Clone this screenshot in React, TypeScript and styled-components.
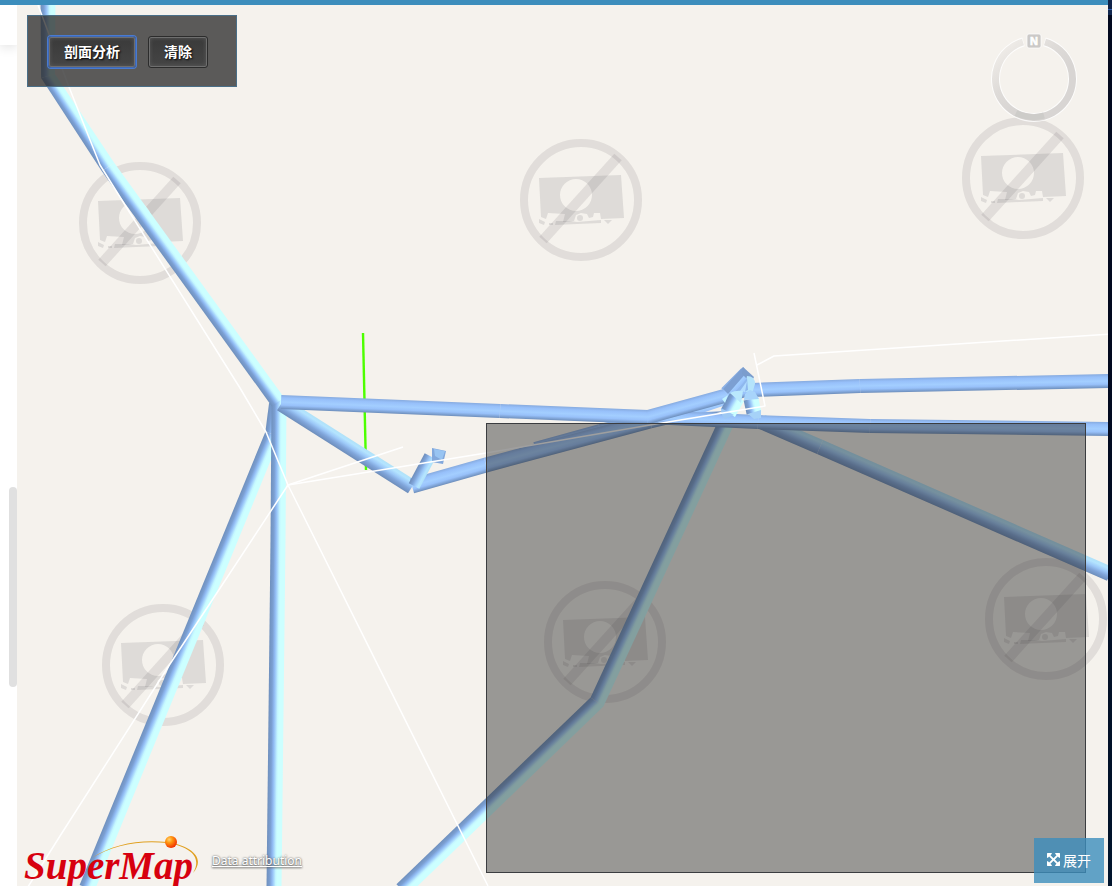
import React, { useId } from "react";
import styled, { createGlobalStyle } from "styled-components";

const sans = `"Noto Sans CJK SC", "Liberation Sans", sans-serif`;

const GlobalStyle = createGlobalStyle`
  *, *::before, *::after { box-sizing: border-box; }
  body { margin: 0; background: #ffffff; font-family: ${sans}; overflow: hidden; }
`;

/* ---------- page frame ---------- */

const Page = styled.div`
  display: grid;
  grid-template-columns: minmax(0, 1fr) 4px;
  height: 100vh;
`;

const Workspace = styled.div`
  display: grid;
  grid-template-columns: 17px minmax(0, 1fr);
  grid-template-rows: minmax(0, 1fr);
  border-top: 5px solid #3c8dbc;
`;

const EdgeStrip = styled.aside`
  background: linear-gradient(#0f2248 0 9px, #2d5bab 9px 10px, #12284f 10px 15px, #02091f 15px 40%, #01142c);
`;

const SideColumn = styled.aside`
  display: flex;
  flex-direction: column;
  background: #ffffff;
`;

const SideHeader = styled.div`
  height: 40px;
  box-shadow: 0 2px 12px rgba(0, 0, 0, 0.12);
  clip-path: inset(0 0 -20px 0);
`;

const ScrollTrack = styled.div`
  flex: 1;
  display: flex;
  flex-direction: column;
  align-items: flex-end;

  &::before { content: ""; flex: 442; }
  &::after { content: ""; flex: 199; }
`;

const ScrollThumb = styled.div`
  width: 8px;
  height: 200px;
  border-radius: 4px;
  background: #e0e0e0;
`;

const MapView = styled.main`
  position: relative;
  overflow: hidden;
  background: #f5f2ed;
`;

const SceneSvg = styled.svg`
  display: block;
  width: 100%;
  height: 100%;
`;

/* ---------- floating controls ---------- */

const Toolbar = styled.div`
  position: absolute;
  top: 10px;
  left: 10px;
  display: flex;
  gap: 12px;
  padding: 20px 28px 18px 20px;
  border: 1px solid #4a6f88;
  background: rgba(42, 42, 42, 0.76);
`;

const ToolButton = styled.button<{ $active?: boolean }>`
  height: 32px;
  padding: 0 15px 2px;
  border: 1px solid #2c2c2c;
  border-radius: 3px;
  background: linear-gradient(#3a3a3a, #454545);
  box-shadow: inset 0 0 0 1px #6e6e6e, inset 0 0 4px 1px #5a5a5a
    ${({ $active }) => ($active ? ", 0 0 0 1px #4a7bd0" : "")};
  ${({ $active }) => ($active ? "border-color: #3f68b4;" : "")}
  color: #ffffff;
  font: bold 14px/20px ${sans};
  text-shadow: 1px 1px 2px #000000;
  white-space: nowrap;
  outline: none;
  cursor: pointer;
`;

const CompassSvg = styled.svg`
  position: absolute;
  top: 26px;
  right: 30px;
  width: 88px;
  height: 94px;
`;

const ProfilePanel = styled.section`
  position: absolute;
  right: 22px;
  bottom: 13px;
  width: 600px;
  height: 450px;
  border: 1px solid #3b3d40;
  background: rgba(42, 42, 42, 0.45);
`;

const ExpandButton = styled.button`
  position: absolute;
  right: 4px;
  bottom: 3px;
  display: flex;
  align-items: center;
  justify-content: center;
  gap: 3px;
  width: 70px;
  height: 45px;
  padding: 0 0 2px;
  border: 0;
  background: rgba(60, 141, 188, 0.8);
  color: #ffffff;
  font: 14px/20px ${sans};
  cursor: pointer;
`;

const ExpandIcon = styled.svg`
  width: 13px;
  height: 13px;
  fill: currentColor;
`;

const Credits = styled.footer`
  position: absolute;
  left: 6px;
  bottom: 0;
  display: flex;
  align-items: flex-end;
  gap: 9px;
`;

const LogoSvg = styled.svg`
  display: block;
  width: 180px;
  height: 52px;
`;

const AttributionLink = styled.a`
  margin-bottom: 16px;
  color: #ffffff;
  font: 12px/18px "Noto Sans", "Open Sans", sans-serif;
  text-decoration: underline;
  text-shadow: 0 0 2px #555555, 0 1px 2px #777777;
  white-space: nowrap;
`;

/* ---------- scene ---------- */

type Point = [number, number];
type Shade = "side" | "flat" | "soft";

const shades: Record<Shade, [number, string][]> = {
  side: [
    [0, "#6f90bd"], [0.22, "#7b9fd2"], [0.36, "#8fb9f2"], [0.48, "#a8d6fc"],
    [0.6, "#c4f6ff"], [0.7, "#ccffff"], [1, "#ccffff"],
  ],
  flat: [
    [0, "#87abdf"], [0.2, "#97c0fa"], [0.5, "#a3ceff"], [0.72, "#98c1fa"], [1, "#6d8ebb"],
  ],
  soft: [
    [0, "#6d8dba"], [0.3, "#80a5da"], [0.55, "#9cc8f8"], [0.8, "#b4e4ff"], [1, "#b0e2f8"],
  ],
};

interface PipeProps {
  points: Point[];
  width: number;
  shade?: Shade;
}

/* A run of cylinder segments, each shaded across its own width. */
function Pipe({ points, width, shade = "side" }: PipeProps) {
  const id = useId();
  const segments = points.slice(1).map((end, i) => {
    const [x1, y1] = points[i];
    const [x2, y2] = end;
    const length = Math.hypot(x2 - x1, y2 - y1);
    let nx = -(y2 - y1) / length;
    let ny = (x2 - x1) / length;
    const flip = shade === "flat" ? ny < 0 : nx < 0;
    if (flip) { nx = -nx; ny = -ny; }
    const h = width / 2;
    return { x1, y1, x2, y2, ox: nx * h, oy: ny * h };
  });
  return (
    <g>
      {segments.map((s, i) => (
        <linearGradient
          key={i} id={`${id}${i}`} gradientUnits="userSpaceOnUse"
          x1={s.x1 - s.ox} y1={s.y1 - s.oy} x2={s.x1 + s.ox} y2={s.y1 + s.oy}
        >
          {shades[shade].map(([at, color]) => <stop key={at} offset={at} stopColor={color} />)}
        </linearGradient>
      ))}
      {segments.map((s, i) => {
        const next = segments[i + 1] ?? s;
        const prev = segments[i - 1] ?? s;
        const ax = (s.ox + prev.ox) / 2, ay = (s.oy + prev.oy) / 2;
        const bx = (s.ox + next.ox) / 2, by = (s.oy + next.oy) / 2;
        return (
          <polygon
            key={i} fill={`url(#${id}${i})`}
            points={`${s.x1 - ax},${s.y1 - ay} ${s.x2 - bx},${s.y2 - by} ${s.x2 + bx},${s.y2 + by} ${s.x1 + ax},${s.y1 + ay}`}
          />
        );
      })}
    </g>
  );
}

const missingTiles: Point[] = [
  [140, 223], [581, 200], [1023, 178], [163, 665], [605, 642], [1046, 619],
];

function MissingTile({ at }: { at: Point }) {
  return (
    <g transform={`translate(${at[0]} ${at[1]})`} fill="#3c3a40" fillOpacity="0.12" stroke="#3c3a40" strokeOpacity="0">
      <circle r="57" fill="none" strokeWidth="8" strokeOpacity="0.11" />
      <path
        fillRule="evenodd"
        d="M-42-22 L40-25 L43 18 L20 19 L19 13 L13 13 L12 17 L8 18 L6 14 L0 13 L-5 15 L-7 21 L-18 22 L-16 14 L-33 13 L-35 19 L-40 17Z
           M11-5 A16 16 0 1 0-21-5 A16 16 0 1 0 11-5Z"
      />
      <circle cx="-1" cy="18" r="3" />
      <path d="M-42 19l6 3-1 3-5-2ZM-32 23h4v2h-4ZM-25 21l14 0 7 1 24-2v3l-24 1-22 1ZM23 20h8l-4 4Z" />
      <path d="M-38 40 L37-43" fill="none" strokeWidth="10" strokeOpacity="0.11" />
    </g>
  );
}

function Scene() {
  return (
    <SceneSvg viewBox="17 5 1091 881" preserveAspectRatio="xMidYMid slice" role="img" aria-label="地下管线三维场景">
      {missingTiles.map((at) => <MissingTile key={at.join()} at={at} />)}

      <path d="M363 333 L366 470" stroke="#4dff00" strokeWidth="2.4" />

      <Pipe points={[[277, 404], [273, 434], [87, 888]]} width={16} />
      <Pipe points={[[279, 400], [278, 540], [274, 888]]} width={15} />
      <Pipe points={[[48, 0], [48, 76], [108, 167], [278, 402]]} width={15} />
      <Pipe points={[[281, 404], [412, 487]]} width={15} shade="soft" />
      <Pipe points={[[762, 422], [820, 447], [1110, 574]]} width={15} shade="soft" />
      <Pipe points={[[726, 423], [597, 702], [402, 890]]} width={16} />
      <Pipe points={[[535, 448], [600, 430], [650, 418]]} width={12} shade="flat" />
      <Pipe points={[[412, 486], [486, 465], [650, 421], [735, 401]]} width={15} shade="flat" />
      <Pipe points={[[281, 402], [500, 411], [648, 417], [758, 422], [870, 426], [1110, 429]]} width={14} shade="flat" />
      <Pipe points={[[648, 417], [728, 395], [752, 388]]} width={14} shade="flat" />
      <Pipe points={[[752, 390], [860, 386], [1110, 381]]} width={14} shade="flat" />

      <Pipe points={[[414, 486], [430, 456]]} width={12} shade="soft" />
      <path d="M432 448l14 3-3 13-11-2Z" fill="#82a8dc" />
      <path d="M434 449l11 2-3 9-7-4Z" fill="#98c4f2" />

      <Pipe points={[[727, 394], [747, 374]]} width={16} shade="flat" />
      <path d="M723 389L743 367l4 5-19 22Z" fill="#7c9fd2" />
      <path d="M743 367l11 10-3 6-9-9Z" fill="#7b9dcd" />
      <path d="M747 376q8 0 8 8l-3 10-8-3Z" fill="#b5e4fb" />
      <path d="M736 392l11-14 1 12-8 4Z" fill="#8fb8ee" />
      <path d="M740 391l7-10-2 11Z" fill="#b2dcff" />
      <path d="M705 412l18-6 3 5Z" fill="#f5f2ed" />
      <Pipe points={[[737, 397], [728, 413]]} width={16} />
      <path d="M730 393q5-3 13-2l-2 12Z" fill="#b9e8fd" />
      <path d="M721 408q0 8 4 11l9-4Z" fill="#9dc8f4" />
      <path d="M722 399l6-4-3 8Z" fill="#c0f2ff" />
      <Pipe points={[[751, 399], [754, 413]]} width={15} />
      <path d="M744 400q0-8 6-10l5 2 4 7Z" fill="#a8d4fb" />
      <path d="M748 414l6 5 7-1 0-8Z" fill="#a6d2f8" />

      <g fill="none" stroke="#ffffff" strokeWidth="1.5" strokeLinejoin="round">
        <path d="M38 5 L69 87 L100 165 L125 205 L240 388 L266 432 L288 485 L488 886" />
        <path d="M403 447 L288 485 L170 664 L60 836 L26 890" />
        <path d="M288 485 L486 453" />
        <path d="M486 453 L650 425 L765 406 L754 353" />
        <path d="M757 365 L774 356 L1110 334" />
      </g>
    </SceneSvg>
  );
}

function Compass() {
  return (
    <CompassSvg viewBox="0 0 88 94" role="img" aria-label="N">
      <defs>
        <linearGradient id="ring" x1="0.1" y1="0" x2="0.6" y2="0.6">
          <stop offset="0" stopColor="#f1eeea" />
          <stop offset="0.6" stopColor="#dedbd8" />
          <stop offset="1" stopColor="#d8d5d3" />
        </linearGradient>
      </defs>
      <g fill="none">
        <path d="M54.5 10.9 A38.5 38.5 0 1 1 33.5 10.9" stroke="#ffffff" strokeOpacity="0.8" strokeWidth="9" />
        <path d="M55 11 A38.5 38.5 0 1 1 33 11" stroke="url(#ring)" strokeWidth="7" />
        <path d="M26 82 A38.5 38.5 0 0 0 54 84.5" stroke="#cbc9c7" strokeWidth="6" strokeOpacity="0.8" />
      </g>
      <rect x="37" y="3" width="14" height="14" rx="2" fill="#cbc9c7" stroke="#ffffff" strokeOpacity="0.7" />
      <text x="44" y="14" textAnchor="middle" fontFamily="Liberation Sans, sans-serif" fontWeight="bold" fontSize="11" fill="#ffffff" stroke="#ffffff" strokeWidth="0.6">N</text>
    </CompassSvg>
  );
}

function Logo() {
  return (
    <LogoSvg viewBox="23 834 180 52" role="img" aria-label="SuperMap">
      <defs>
        <radialGradient id="ball" cx="0.35" cy="0.3" r="0.75">
          <stop offset="0" stopColor="#ffd27a" />
          <stop offset="0.35" stopColor="#ff9a10" />
          <stop offset="1" stopColor="#f02800" />
        </radialGradient>
      </defs>
      <path d="M92 858 C112 844 140 839 167 842 C192 846 206 858 193 873 C202 858 192 847 167 843 C140 840 112 845 92 858Z" fill="#e0a020" />
      <text x="24" y="879" fontFamily="Liberation Serif, serif" fontWeight="bold" fontStyle="italic" fontSize="39" fill="#d7000f">SuperMap</text>
      <circle cx="171" cy="842" r="6" fill="url(#ball)" />
    </LogoSvg>
  );
}

export default function App() {
  return (
    <>
      <GlobalStyle />
      <Page>
        <Workspace>
          <SideColumn>
            <SideHeader />
            <ScrollTrack>
              <ScrollThumb />
            </ScrollTrack>
          </SideColumn>
          <MapView>
            <Scene />
            <Toolbar>
              <ToolButton type="button" $active>剖面分析</ToolButton>
              <ToolButton type="button">清除</ToolButton>
            </Toolbar>
            <Compass />
            <Credits>
              <Logo />
              <AttributionLink href="#attribution">Data attribution</AttributionLink>
            </Credits>
            <ProfilePanel aria-label="剖面图" />
            <ExpandButton type="button">
              <ExpandIcon viewBox="0 0 1536 1536" aria-hidden>
                <path d="M1283 413l-355 355 355 355 144-144q29-31 70-14 39 17 39 59v448q0 26-19 45t-45 19h-448q-42 0-59-40-17-39 14-69l144-144-355-355-355 355 144 144q31 30 14 69-17 40-59 40h-448q-26 0-45-19t-19-45v-448q0-42 40-59 39-17 69 14l144 144 355-355-355-355-144 144q-19 19-45 19-12 0-24-5-40-17-40-59v-448q0-26 19-45t45-19h448q42 0 59 40 17 39-14 69l-144 144 355 355 355-355-144-144q-31-30-14-69 17-40 59-40h448q26 0 45 19t19 45v448q0 42-39 59-13 5-25 5-26 0-45-19z" />
              </ExpandIcon>
              展开
            </ExpandButton>
          </MapView>
        </Workspace>
        <EdgeStrip />
      </Page>
    </>
  );
}
